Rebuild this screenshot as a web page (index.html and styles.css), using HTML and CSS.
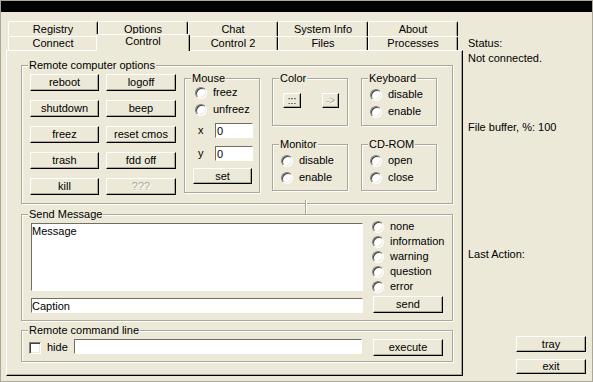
FILE: index.html
```html
<!DOCTYPE html>
<html lang="en">
<head>
    <meta charset="UTF-8">
    <title>Control</title>
    <link rel="stylesheet" href="styles.css">
</head>
<body>
<div class="window">
    <div class="titlebar"></div>
    <div class="content">
        <div class="main">
            <div class="tab-row">
                <div class="tab">Registry</div>
                <div class="tab">Options</div>
                <div class="tab">Chat</div>
                <div class="tab">System Info</div>
                <div class="tab">About</div>
            </div>
            <div class="tab-row">
                <div class="tab">Connect</div>
                <div class="tab active">Control</div>
                <div class="tab">Control 2</div>
                <div class="tab">Files</div>
                <div class="tab">Processes</div>
            </div>
            <div class="panel">
                <fieldset class="group options">
                    <legend>Remote computer options</legend>
                    <div class="options-body">
                        <div class="commands">
                            <button class="btn">reboot</button>
                            <button class="btn">logoff</button>
                            <button class="btn">shutdown</button>
                            <button class="btn">beep</button>
                            <button class="btn">freez</button>
                            <button class="btn">reset cmos</button>
                            <button class="btn">trash</button>
                            <button class="btn">fdd off</button>
                            <button class="btn">kill</button>
                            <button class="btn" disabled>???</button>
                        </div>
                        <fieldset class="group mouse">
                            <legend>Mouse</legend>
                            <div class="choices">
                                <label class="choice"><input type="radio" name="mouse">freez</label>
                                <label class="choice"><input type="radio" name="mouse">unfreez</label>
                            </div>
                            <div class="coord coord-x"><span class="coord-name">x</span><input class="field" type="text" value="0"></div>
                            <div class="coord coord-y"><span class="coord-name">y</span><input class="field" type="text" value="0"></div>
                            <button class="btn set">set</button>
                        </fieldset>
                        <div class="devices">
                            <fieldset class="group">
                                <legend>Color</legend>
                                <div class="color-body">
                                    <button class="btn pick">:::</button>
                                    <button class="btn apply" disabled>-&gt;</button>
                                </div>
                            </fieldset>
                            <fieldset class="group">
                                <legend>Keyboard</legend>
                                <div class="choices">
                                    <label class="choice"><input type="radio" name="keyboard">disable</label>
                                    <label class="choice"><input type="radio" name="keyboard">enable</label>
                                </div>
                            </fieldset>
                            <fieldset class="group">
                                <legend>Monitor</legend>
                                <div class="choices">
                                    <label class="choice"><input type="radio" name="monitor">disable</label>
                                    <label class="choice"><input type="radio" name="monitor">enable</label>
                                </div>
                            </fieldset>
                            <fieldset class="group">
                                <legend>CD-ROM</legend>
                                <div class="choices">
                                    <label class="choice"><input type="radio" name="cdrom">open</label>
                                    <label class="choice"><input type="radio" name="cdrom">close</label>
                                </div>
                            </fieldset>
                        </div>
                    </div>
                </fieldset>

                <div class="splitter"></div>

                <fieldset class="group message">
                    <legend>Send Message</legend>
                    <div class="message-body">
                        <div class="message-main">
                            <textarea class="field message-text">Message</textarea>
                            <input class="field caption" type="text" value="Caption">
                        </div>
                        <div class="message-side">
                            <div class="choices">
                                <label class="choice"><input type="radio" name="icon">none</label>
                                <label class="choice"><input type="radio" name="icon">information</label>
                                <label class="choice"><input type="radio" name="icon">warning</label>
                                <label class="choice"><input type="radio" name="icon">question</label>
                                <label class="choice"><input type="radio" name="icon">error</label>
                            </div>
                            <button class="btn send">send</button>
                        </div>
                    </div>
                </fieldset>

                <fieldset class="group cmd">
                    <legend>Remote command line</legend>
                    <div class="cmd-body">
                        <label class="hide"><input type="checkbox">hide</label>
                        <input class="field command" type="text" value="">
                        <button class="btn execute">execute</button>
                    </div>
                </fieldset>
            </div>
        </div>

        <div class="side">
            <div class="status-label">Status:</div>
            <div class="status">Not connected.</div>
            <div class="buffer">File buffer, %: 100</div>
            <div class="last-action">Last Action:</div>
            <button class="btn tray">tray</button>
            <button class="btn exit">exit</button>
        </div>
    </div>
</div>
</body>
</html>
```

FILE: styles.css
```css
body {
    margin: 0;
    padding: 0;
    font-family: "Liberation Sans", Arial, sans-serif;
    font-size: 11px;
    line-height: 13px;
    color: #000;
}

/* controls */

.btn {
    height: 17px;
    box-sizing: border-box;
    margin: 0;
    padding: 0;
    font: inherit;
    line-height: 13px;
    color: #000;
    background: #ece9d8;
    border: 1px solid;
    border-color: #fff #000 #000 #fff;
    border-radius: 0;
    box-shadow: inset -1px -1px 0 #aca899;
}

.btn:disabled {
    color: #aca899;
    text-shadow: 1px 1px 0 #fff;
}

.field {
    box-sizing: border-box;
    margin: 0;
    padding: 0;
    font: inherit;
    line-height: 13px;
    color: #000;
    background: #fff;
    border: 1px solid;
    border-color: #716f64 #fff #fff #716f64;
    border-radius: 0;
    outline: none;
}

.choice {
    display: flex;
    align-items: center;
    gap: 6px;
    height: 17px;
    white-space: nowrap;
}

.choice input,
.hide input {
    appearance: none;
    flex: none;
    box-sizing: border-box;
    width: 12px;
    height: 12px;
    margin: 0;
    background: #fff;
    border: 1px solid;
    border-color: #808080 #fff #fff #808080;
    box-shadow: inset 1px 1px 0 #404040, inset -1px -1px 0 #ece9d8;
}

.choice input {
    border-radius: 50%;
}

/* window */

.window {
    width: 593px;
    height: 382px;
    box-sizing: border-box;
    border: 1px solid #aca899;
    background: #ece9d8;
    overflow: hidden;
}

.titlebar {
    height: 11px;
    background: #000;
}

.content {
    display: flex;
    padding-top: 9px;
}

.main {
    margin-left: 5px;
    width: 457px;
}

/* tabs */

.tab-row {
    display: flex;
    padding-left: 2px;
}

.tab {
    width: 90px;
    height: 15px;
    box-sizing: border-box;
    padding-top: 1px;
    border-top: 1px solid #fff;
    border-left: 1px solid #fff;
    border-right: 1px solid #000;
    border-radius: 2px 2px 0 0;
    box-shadow: inset -1px 0 0 #aca899;
    background: #ece9d8;
    text-align: center;
    white-space: nowrap;
}

.tab-row + .tab-row .tab {
    height: 14px;
    padding-top: 0;
}

.tab-row + .tab-row .tab.active {
    position: relative;
    z-index: 1;
    width: 94px;
    height: 17px;
    margin: -2px -2px -1px;
}

.panel {
    height: 326px;
    box-sizing: border-box;
    border-top: 1px solid #fff;
    border-left: 1px solid #fff;
    border-right: 1px solid #000;
    border-bottom: 1px solid #000;
    box-shadow: inset -1px -1px 0 #aca899;
    padding: 8px 0 0 14px;
}

/* group boxes */

.group {
    box-sizing: border-box;
    margin: 0;
    padding: 0;
    min-width: 0;
    border: 1px solid #aca899;
    box-shadow: inset 1px 1px 0 #fff, 1px 1px 0 #fff;
}

.group legend {
    margin-left: 6px;
    padding: 0 1px;
    background: #ece9d8;
    line-height: 13px;
}

.options,
.message,
.cmd {
    width: 432px;
}

.options-body {
    display: flex;
    align-items: flex-start;
    height: 131px;
    padding-left: 8px;
}

.commands {
    display: grid;
    grid-template-columns: 69px 70px;
    column-gap: 7px;
    row-gap: 9px;
    margin-top: 2px;
}

.mouse {
    width: 76px;
    margin-left: 8px;
    padding-bottom: 8px;
}

.mouse .choices {
    padding-left: 10px;
    margin-top: -1px;
}

.coord {
    display: flex;
    align-items: center;
    padding-left: 13px;
}

.coord-x {
    margin-top: 5px;
}

.coord-y {
    margin-top: 8px;
}

.coord-name {
    width: 17px;
}

.coord .field {
    width: 38px;
    height: 15px;
    padding-left: 1px;
}

.set {
    display: block;
    width: 59px;
    height: 16px;
    margin: 7px 0 0 8px;
}

.devices {
    display: grid;
    grid-template-columns: 76px 76px;
    grid-template-rows: 54px 53px;
    column-gap: 13px;
    row-gap: 12px;
    margin-left: 12px;
}

.devices .choices {
    padding-left: 8px;
    margin-top: 1px;
}

.color-body {
    display: flex;
    padding: 8px 0 0 10px;
}

.pick,
.apply {
    width: 18px;
    height: 15px;
    font-size: 10px;
}

.apply {
    width: 17px;
    margin-left: 21px;
}

.splitter {
    width: 0;
    height: 14px;
    margin: -4px 0 -6px 284px;
    border-left: 1px solid #aca899;
    border-right: 1px solid #fff;
}

/* send message */

.message-body {
    display: flex;
    height: 99px;
}

.message-main {
    padding-left: 9px;
}

.message-text {
    display: block;
    width: 332px;
    height: 68px;
    margin-top: 2px;
    padding-top: 1px;
    resize: none;
    overflow: hidden;
}

.caption {
    display: block;
    width: 332px;
    height: 15px;
    margin-top: 7px;
}

.message-side {
    margin-left: 9px;
}

.message-side .choices {
    margin-top: -2px;
}

.message-side .choice {
    height: 15px;
}

.send {
    display: block;
    width: 70px;
    margin: 2px 0 0 1px;
}

/* command line */

.cmd {
    margin-top: 3px;
}

.cmd-body {
    display: flex;
    align-items: flex-start;
    height: 24px;
    padding-left: 7px;
}

.hide {
    display: flex;
    align-items: center;
    gap: 6px;
    width: 45px;
    margin-top: 4px;
}

.command {
    width: 288px;
    height: 15px;
    margin-top: 2px;
}

.execute {
    width: 70px;
    margin: 2px 0 0 11px;
}

/* right column */

.side {
    display: flex;
    flex-direction: column;
    align-items: flex-start;
    margin-left: 5px;
    padding-top: 16px;
}

.status {
    margin-top: 2px;
}

.buffer {
    margin-top: 56px;
}

.last-action {
    margin-top: 114px;
}

.tray,
.exit {
    width: 70px;
    height: 16px;
    margin-left: 48px;
}

.tray {
    margin-top: 75px;
}

.exit {
    height: 15px;
    margin-top: 7px;
}
```
